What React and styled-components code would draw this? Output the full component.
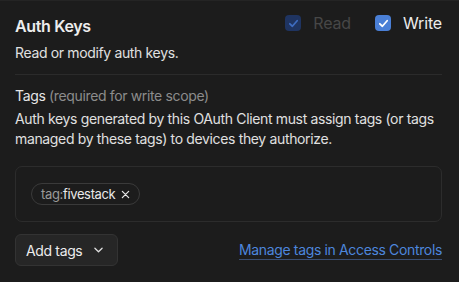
import React from "react";
import styled, { createGlobalStyle } from "styled-components";

const Global = createGlobalStyle`
  html, body { margin: 0; padding: 0; background: #1c1c1c; }
  body {
    font-family: Inter, "Noto Sans", "Liberation Sans", sans-serif;
    color: #e6e6e6;
    letter-spacing: -0.022em;
    -webkit-font-smoothing: antialiased;
  }
  * { box-sizing: border-box; }
`;

const Panel = styled.section`
  border-top: 1px solid #242424;
  padding: 10px 17px 16px 15px;
  display: flex;
  flex-direction: column;
  min-height: 282px;
`;

const Header = styled.div`
  display: flex;
  justify-content: space-between;
  align-items: flex-start;
`;

const Title = styled.h2`
  margin: 0;
  padding-top: 3px;
  font-size: 16px;
  line-height: 24px;
  font-weight: 600;
  color: #ededed;
`;

const Scopes = styled.div`
  display: flex;
  align-items: center;
  gap: 24px;
`;

const Scope = styled.label`
  display: flex;
  align-items: center;
  gap: 12px;
  font-size: 16px;
  line-height: 24px;
  letter-spacing: -0.01em;
  color: ${(p) => (p.$disabled ? "#474747" : "#ececec")};
`;

const Box = styled.span`
  width: 16px;
  height: 16px;
  border-radius: 4px;
  display: flex;
  align-items: center;
  justify-content: center;
  background: ${(p) => (p.$disabled ? "#1f3461" : "#4a7fd6")};
  color: ${(p) => (p.$disabled ? "#3e6cc0" : "#ffffff")};
`;

const Desc = styled.p`
  margin: 5px 0 0;
  font-size: 14px;
  line-height: 20px;
  color: #e0e0e0;
`;

const Divider = styled.hr`
  margin: 11px 0 0;
  border: none;
  border-top: 1px solid #2b2b2b;
`;

const Label = styled.div`
  margin-top: 11px;
  font-size: 14px;
  line-height: 20px;
  color: #e6e6e6;
`;

const Hint = styled.span`
  color: #8c8c8c;
`;

const Text = styled.p`
  margin: 3px 0 0;
  font-size: 14px;
  line-height: 20px;
  color: #e0e0e0;
`;

const TagBox = styled.div`
  margin-top: 17px;
  border: 1px solid #2c2c2c;
  border-radius: 7px;
  padding: 16px 15px;
  display: flex;
  flex-wrap: wrap;
  gap: 6px;
`;

const Chip = styled.span`
  display: inline-flex;
  align-items: center;
  height: 22px;
  padding: 0 9px;
  border: 1px solid #3a3a3a;
  border-radius: 11px;
  font-size: 13px;
  color: #e8e8e8;
  gap: 6px;
`;

const Prefix = styled.span`
  color: #9a9a9a;
`;

const Footer = styled.div`
  margin-top: 12px;
  display: flex;
  justify-content: space-between;
  align-items: center;
`;

const Button = styled.button`
  height: 32px;
  padding: 0 14px 0 10px;
  display: inline-flex;
  align-items: center;
  gap: 12px;
  background: #262626;
  border: 1px solid #333333;
  border-radius: 6px;
  font-family: inherit;
  letter-spacing: inherit;
  font-size: 14px;
  color: #ececec;
`;

const Link = styled.a`
  font-size: 14px;
  line-height: 20px;
  color: #4d86dc;
  text-decoration: underline;
  text-decoration-color: #3a4d70;
  text-underline-offset: 4px;
  text-decoration-thickness: 1px;
`;

const Check = () => (
  <svg width="11" height="11" viewBox="0 0 12 12" fill="none">
    <path d="M2 6.3 L4.8 9 L10 3" stroke="currentColor" strokeWidth="1.9" strokeLinecap="round" strokeLinejoin="round" />
  </svg>
);

const Close = () => (
  <svg width="9" height="9" viewBox="0 0 10 10" fill="none">
    <path d="M1.5 1.5 L8.5 8.5 M8.5 1.5 L1.5 8.5" stroke="#e8e8e8" strokeWidth="1.4" strokeLinecap="round" />
  </svg>
);

const Chevron = () => (
  <svg width="9" height="6" viewBox="0 0 10 6" fill="none">
    <path d="M1 1 L5 5 L9 1" stroke="#e0e0e0" strokeWidth="1.4" strokeLinecap="round" strokeLinejoin="round" />
  </svg>
);

export default function App() {
  return (
    <>
      <Global />
      <Panel>
        <Header>
          <Title>Auth Keys</Title>
          <Scopes>
            <Scope $disabled>
              <Box $disabled><Check /></Box>
              Read
            </Scope>
            <Scope>
              <Box><Check /></Box>
              Write
            </Scope>
          </Scopes>
        </Header>
        <Desc>Read or modify auth keys.</Desc>
        <Divider />
        <Label>
          Tags <Hint>(required for write scope)</Hint>
        </Label>
        <Text>
          Auth keys generated by this OAuth Client must assign tags (or tags managed by these tags) to devices they authorize.
        </Text>
        <TagBox>
          <Chip>
            <span><Prefix>tag:</Prefix>fivestack</span>
            <Close />
          </Chip>
        </TagBox>
        <Footer>
          <Button>
            Add tags
            <Chevron />
          </Button>
          <Link href="#">Manage tags in Access Controls</Link>
        </Footer>
      </Panel>
    </>
  );
}
